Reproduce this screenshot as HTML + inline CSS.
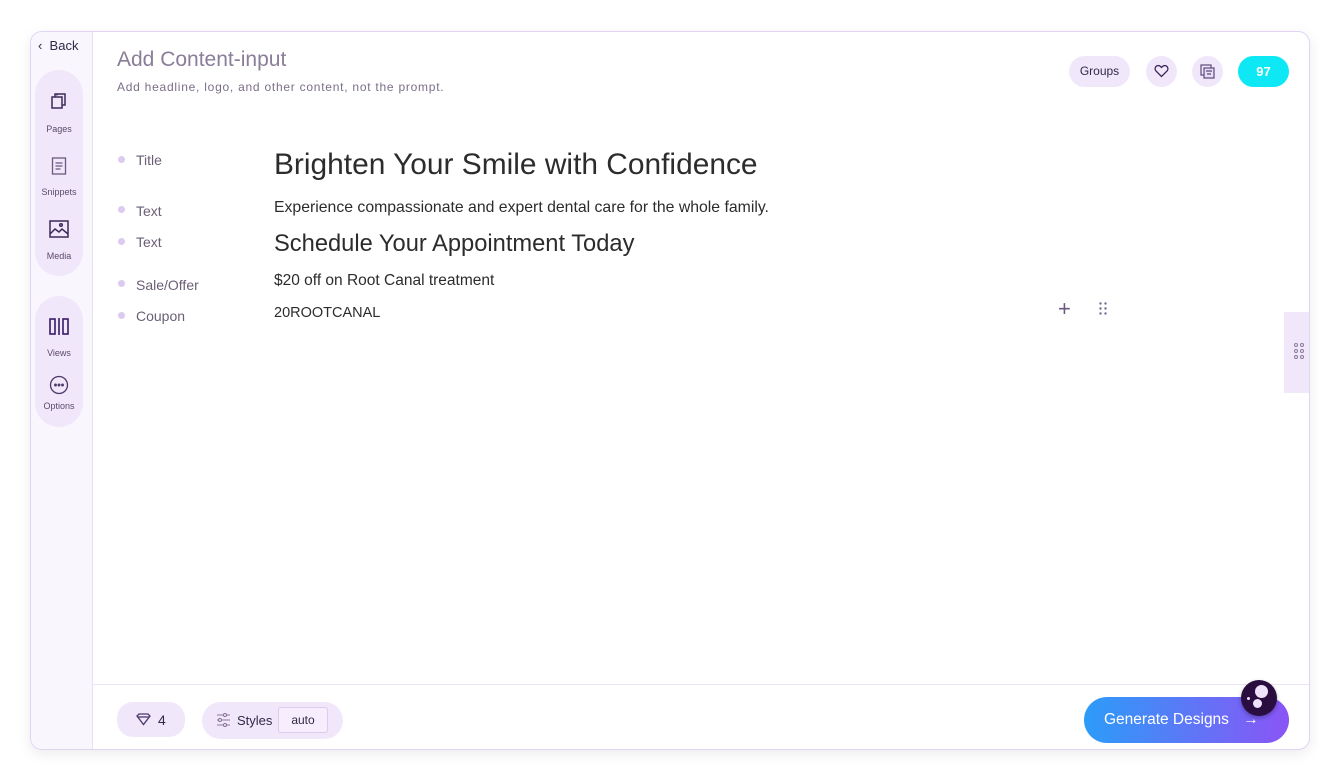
<!DOCTYPE html>
<html><head><style>
*{box-sizing:border-box;margin:0;padding:0}
body{width:1340px;height:781px;background:#fff;font-family:"Liberation Sans",sans-serif;position:relative;overflow:hidden}
.card{position:absolute;left:30px;top:31px;width:1280px;height:719px;border:1px solid #e2d4f4;border-radius:12px;box-shadow:0 4px 14px rgba(0,0,0,.08);background:#fff;overflow:hidden}
.side{position:absolute;left:0;top:0;width:62px;height:100%;background:#faf6fe;border-right:1px solid #eadff8}
.pill{position:absolute;left:4px;width:48px;background:#f1e7fb;border-radius:24px}
.si{position:absolute;left:0;width:56px;text-align:center;font-size:9px;color:#5a4a6a}
.lbl{position:absolute;left:105px;font-size:14px;color:#6a5f75}
.dot{position:absolute;left:87px;width:7px;height:7px;border-radius:50%;background:#dccaf0}
.v{position:absolute;left:243px;color:#2c2c2c}
.btn{position:absolute;background:#f1e7fb;border-radius:16px}
</style></head><body>
<div class="card">
 <div class="side">
  <div style="position:absolute;left:7px;top:6px;font-size:13px;color:#2f2a45">‹ &nbsp;Back</div>
  <div class="pill" style="top:38px;height:206px"></div>
  <div class="pill" style="top:264px;height:131px"></div>
  <svg style="position:absolute;left:19px;top:60px" width="18" height="18" viewBox="0 0 18 18" fill="none" stroke="#3a2a5a" stroke-width="1.5"><rect x="2" y="5" width="10" height="11"/><path d="M5 5V2h10v11h-3"/><path d="M7 3.5V2"/></svg>
  <div class="si" style="top:92px">Pages</div>
  <svg style="position:absolute;left:20px;top:125px" width="16" height="18" viewBox="0 0 16 18" fill="none" stroke="#6a5a80" stroke-width="1.3"><rect x="1.5" y="1" width="13" height="16"/><path d="M4.5 6h7M4.5 9h7M4.5 12h5"/></svg>
  <div class="si" style="top:155px">Snippets</div>
  <svg style="position:absolute;left:18px;top:188px" width="20" height="18" viewBox="0 0 20 18" fill="none" stroke="#3a2a5a" stroke-width="1.5"><rect x="1" y="1" width="18" height="16"/><path d="M1 14l5-5 4 3 3-3 6 5"/><circle cx="12" cy="5" r="1.3"/></svg>
  <div class="si" style="top:219px">Media</div>
  <svg style="position:absolute;left:18px;top:286px" width="20" height="17" viewBox="0 0 20 17" fill="none" stroke="#3a1a6a" stroke-width="1.6"><rect x="1" y="1" width="5" height="15"/><path d="M10 0v17"/><rect x="14" y="1" width="5" height="15"/></svg>
  <div class="si" style="top:316px">Views</div>
  <svg style="position:absolute;left:18px;top:343px" width="20" height="20" viewBox="0 0 20 20" fill="none" stroke="#4a3a6a" stroke-width="1.3"><circle cx="10" cy="10" r="8.5"/><circle cx="6.5" cy="10" r=".8" fill="#4a3a6a"/><circle cx="10" cy="10" r=".8" fill="#4a3a6a"/><circle cx="13.5" cy="10" r=".8" fill="#4a3a6a"/></svg>
  <div class="si" style="top:369px">Options</div>
 </div>
 <div style="position:absolute;left:86px;top:16px;font-size:21px;color:#8a7d98">Add Content-input</div>
 <div style="position:absolute;left:86px;top:48px;font-size:12px;color:#7a6f88;letter-spacing:.75px">Add headline, logo, and other content, not the prompt.</div>
 <div class="btn" style="left:1038px;top:24px;width:61px;height:31px;font-size:12px;color:#2f2a45;text-align:center;line-height:31px">Groups</div>
 <div class="btn" style="left:1115px;top:24px;width:31px;height:31px"></div>
 <svg style="position:absolute;left:1123px;top:32px" width="15" height="14" viewBox="0 0 15 14" fill="none" stroke="#3a2a5a" stroke-width="1.3"><path d="M7.5 12.5L2 7a3 3 0 014.5-4.5l1 1 1-1A3 3 0 0113 7z"/></svg>
 <div class="btn" style="left:1161px;top:24px;width:31px;height:31px"></div>
 <svg style="position:absolute;left:1169px;top:32px" width="15" height="15" viewBox="0 0 15 15" fill="none" stroke="#5a4a7a" stroke-width="1.2"><rect x="1" y="1" width="10" height="10"/><rect x="4" y="4" width="10" height="10" fill="#e8dcf6"/><path d="M6 7h6M7 10h4"/></svg>
 <div style="position:absolute;left:1207px;top:24px;width:51px;height:31px;border-radius:16px;background:#0ee8f5;color:#fff;font-weight:bold;font-size:13px;text-align:center;line-height:31px">97</div>

 <div class="dot" style="top:124px"></div><div class="lbl" style="top:120px">Title</div>
 <div class="dot" style="top:174px"></div><div class="lbl" style="top:171px">Text</div>
 <div class="dot" style="top:206px"></div><div class="lbl" style="top:202px">Text</div>
 <div class="dot" style="top:248px"></div><div class="lbl" style="top:245px">Sale/Offer</div>
 <div class="dot" style="top:280px"></div><div class="lbl" style="top:276px">Coupon</div>
 <div class="v" style="top:116px;font-size:29.9px">Brighten Your Smile with Confidence</div>
 <div class="v" style="top:167px;font-size:15.8px">Experience compassionate and expert dental care for the whole family.</div>
 <div class="v" style="top:199px;font-size:23.7px">Schedule Your Appointment Today</div>
 <div class="v" style="top:240px;font-size:15.5px">$20 off on Root Canal treatment</div>
 <div class="v" style="top:273px;font-size:14.5px">20ROOTCANAL</div>
 <div style="position:absolute;left:1027px;top:264px;font-size:22px;color:#6a5a80">+</div>
 <svg style="position:absolute;left:1068px;top:270px" width="8" height="13" viewBox="0 0 8 13" fill="#7a6a90"><circle cx="1.5" cy="1.5" r="1.2"/><circle cx="6.5" cy="1.5" r="1.2"/><circle cx="1.5" cy="6.5" r="1.2"/><circle cx="6.5" cy="6.5" r="1.2"/><circle cx="1.5" cy="11.5" r="1.2"/><circle cx="6.5" cy="11.5" r="1.2"/></svg>
 <div style="position:absolute;left:1253px;top:280px;width:27px;height:81px;background:#f1e7fb"></div>
 <svg style="position:absolute;left:1263px;top:311px" width="10" height="16" viewBox="0 0 10 16" fill="none" stroke="#8a7a9a" stroke-width="1"><circle cx="2" cy="2" r="1.5"/><circle cx="8" cy="2" r="1.5"/><circle cx="2" cy="8" r="1.5"/><circle cx="8" cy="8" r="1.5"/><circle cx="2" cy="14" r="1.5"/><circle cx="8" cy="14" r="1.5"/></svg>

 <div style="position:absolute;left:62px;top:652px;width:1218px;height:1px;background:#eee4f8"></div>
 <div class="btn" style="left:86px;top:670px;width:68px;height:35px"></div>
 <svg style="position:absolute;left:105px;top:681px" width="15" height="13" viewBox="0 0 15 13" fill="none" stroke="#4a3a6a" stroke-width="1.3"><path d="M1 3l2-2h9l2 2-6.5 8.5z"/><path d="M2 4h11"/></svg>
 <div style="position:absolute;left:127px;top:680px;font-size:14px;color:#2f2a45">4</div>
 <div class="btn" style="left:171px;top:670px;width:141px;height:37px;border-radius:19px"></div>
 <svg style="position:absolute;left:185px;top:681px" width="15" height="14" viewBox="0 0 15 14" fill="none" stroke="#8a7a9a" stroke-width="1.1"><path d="M1 2h13M1 7h13M1 12h13"/><circle cx="9" cy="2" r="1.6" fill="#f1e7fb"/><circle cx="4" cy="7" r="1.6" fill="#f1e7fb"/><circle cx="9" cy="12" r="1.6" fill="#f1e7fb"/></svg>
 <div style="position:absolute;left:206px;top:681px;font-size:13px;color:#2f2a45">Styles</div>
 <div style="position:absolute;left:247px;top:675px;width:50px;height:26px;border:1px solid #dccaf0;border-radius:3px;background:#f6eefd;font-size:12px;color:#2f2a45;text-align:center;line-height:24px">auto</div>
 <div style="position:absolute;left:1053px;top:665px;width:205px;height:46px;border-radius:23px;background:linear-gradient(90deg,#2c9cf8,#8b54f6);color:#fff;font-size:15.5px;line-height:46px;padding-left:20px">Generate Designs <span style="margin-left:10px">→</span></div>
 <div style="position:absolute;left:1210px;top:648px;width:36px;height:36px;border-radius:50%;background:#2a0e40;box-shadow:0 2px 4px rgba(0,0,0,.3)"></div>
 <div style="position:absolute;left:1224px;top:653px;width:13px;height:13px;border-radius:50%;background:#efe3fb"></div>
 <div style="position:absolute;left:1222px;top:667px;width:9px;height:9px;border-radius:50%;background:#efe3fb"></div>
 <div style="position:absolute;left:1216px;top:665px;width:3px;height:3px;border-radius:50%;background:#efe3fb"></div>
</div>
</body></html>
